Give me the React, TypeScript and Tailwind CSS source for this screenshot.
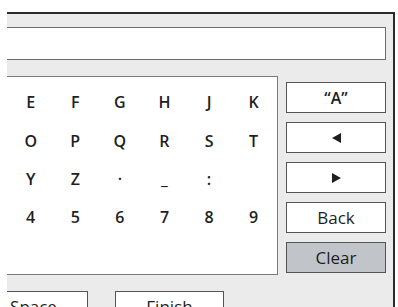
import React from 'react'

// first four columns sit outside the visible slice of the dialog
const rows: string[][] = [
  ['', '', '', '', 'E', 'F', 'G', 'H', 'J', 'K'],
  ['', '', '', '', 'O', 'P', 'Q', 'R', 'S', 'T'],
  ['', '', '', '', 'Y', 'Z', '·', '_', ':', ''],
  ['', '', '', '', '4', '5', '6', '7', '8', '9'],
]

const SideButton: React.FC<{ children: React.ReactNode; muted?: boolean }> = ({ children, muted }) => (
  <div
    className={`h-[31px] w-[100px] flex items-center justify-center border border-[#555] text-[17px] text-[#1e1e1e] ${
      muted ? 'bg-[#c1c5ca]' : 'bg-white'
    }`}
  >
    {children}
  </div>
)

const App: React.FC = () => {
  return (
    <div
      className="w-[398px] h-[307px] bg-white overflow-hidden"
      style={{ fontFamily: '"Open Sans", "DejaVu Sans", sans-serif' }}
    >
      {/* visible slice of the keyboard dialog */}
      <div className="ml-[7px] pt-[12px] w-[388px] h-[307px] overflow-hidden">
        <div className="-ml-[200px] w-[588px] h-[320px] bg-[#ebebeb] border-t-2 border-r-2 border-[#2b2b2b] pt-[13px] pl-[21px] pr-[7px]">
          {/* text field */}
          <div className="h-[33px] ml-[-21px] bg-white border-[1.5px] border-[#6b6b6b]" />

          <div className="flex mt-[16px] gap-[8px]">
            {/* key grid */}
            <div className="w-[450px] h-[199px] bg-white border border-[#7a7a7a] pt-[6px] pl-[1px]">
              {rows.map((row, r) => (
                <div key={r} className="grid grid-cols-[repeat(10,44.6px)] h-[38.4px]">
                  {row.map((k, c) => (
                    <div
                      key={c}
                      className={`flex items-center justify-center text-[16px] font-semibold text-[#1e1e1e] ${
                        k === '·' ? 'font-bold' : ''
                      }`}
                    >
                      {k}
                    </div>
                  ))}
                </div>
              ))}
            </div>

            {/* side buttons */}
            <div className="flex flex-col gap-[9px] pt-[6px]">
              <SideButton>
                <span className="font-semibold text-[16px]">“A”</span>
              </SideButton>
              <SideButton>
                <svg width="9" height="10" viewBox="0 0 9 10">
                  <path d="M0 5 L9 0 L9 10 Z" fill="#1e1e1e" />
                </svg>
              </SideButton>
              <SideButton>
                <svg width="9" height="10" viewBox="0 0 9 10">
                  <path d="M9 5 L0 0 L0 10 Z" fill="#1e1e1e" />
                </svg>
              </SideButton>
              <SideButton>Back</SideButton>
              <SideButton muted>Clear</SideButton>
            </div>
          </div>

          {/* bottom actions */}
          <div className="flex gap-[27px] mt-[16px] pl-[151px]">
            <div className="w-[109px] h-[31px] bg-white border border-[#555] flex items-center justify-center text-[17px] text-[#1e1e1e]">
              Space
            </div>
            <div className="w-[109px] h-[31px] bg-white border border-[#555] flex items-center justify-center text-[17px] text-[#1e1e1e]">
              Finish
            </div>
          </div>
        </div>
      </div>
    </div>
  )
}

export default App
